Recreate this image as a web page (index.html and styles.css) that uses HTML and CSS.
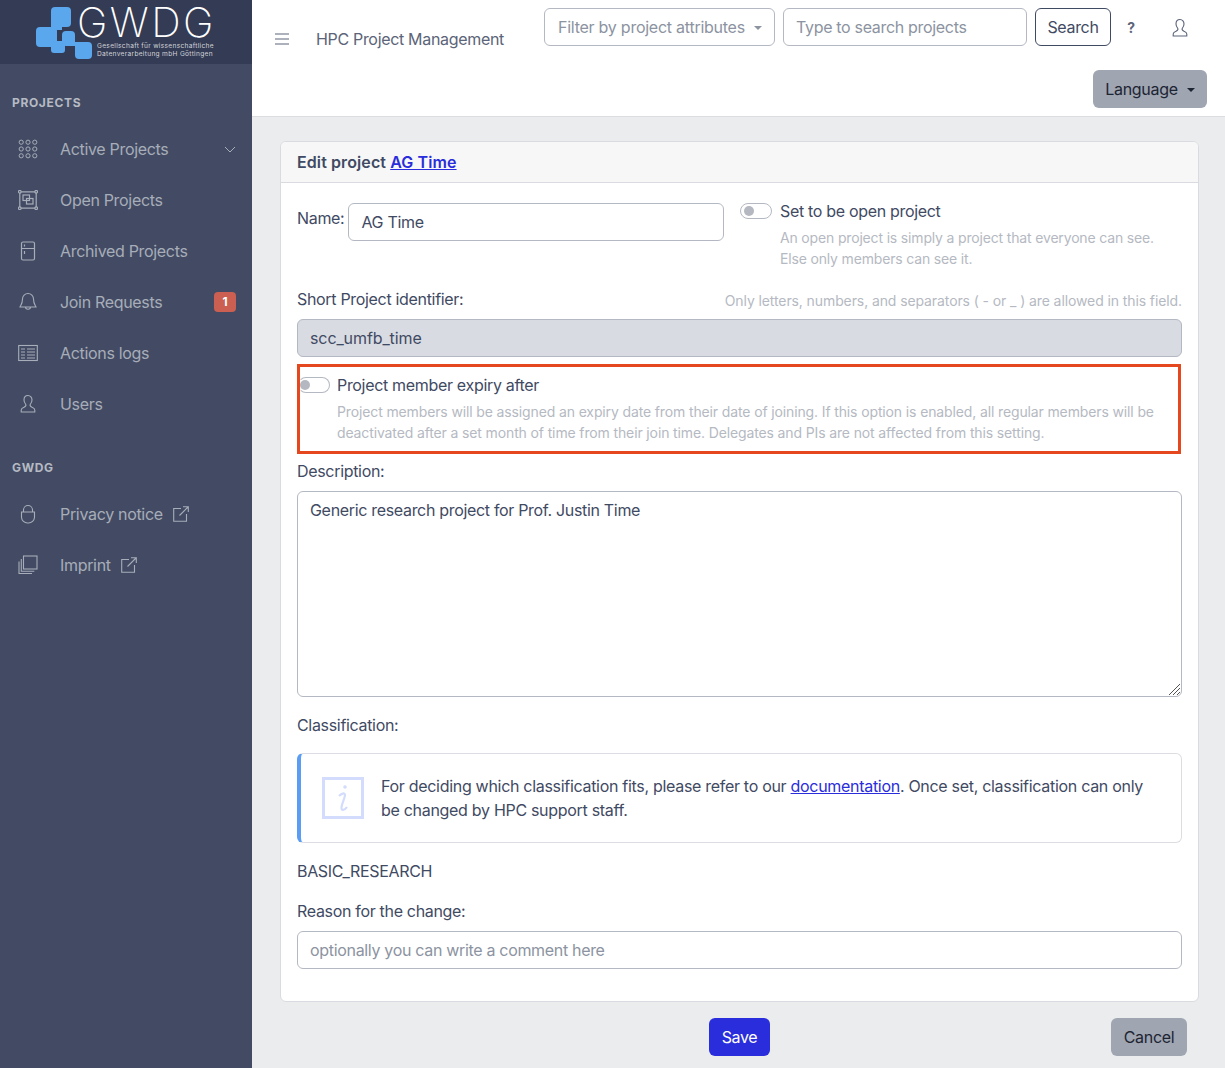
FILE: index.html
```html
<!DOCTYPE html>
<html lang="en">
<head>
    <meta charset="UTF-8">
    <meta name="viewport" content="width=device-width, initial-scale=1.0">
    <title>HPC Project Management</title>
    <link rel="stylesheet" href="styles.css">
</head>
<body>
    <aside class="sidebar">
        <div class="brand">
            <svg class="brand-mark" width="56" height="52" viewBox="0 0 56 52">
                <g fill="#5aa7ee">
                    <rect x="15" y="0" width="20" height="20" rx="4"/>
                    <rect x="0" y="20" width="21" height="20" rx="4"/>
                    <rect x="15" y="15" width="11" height="8"/>
                    <rect x="15" y="34" width="14" height="12" rx="3"/>
                    <rect x="26" y="24" width="13" height="15" rx="4"/>
                    <rect x="39" y="35" width="17" height="17" rx="4"/>
                    <rect x="35" y="35" width="8" height="4"/>
                </g>
            </svg>
            <div class="brand-text">
                <div class="brand-name">GWDG</div>
                <div class="brand-sub">Gesellschaft für wissenschaftliche<br>Datenverarbeitung mbH Göttingen</div>
            </div>
        </div>

        <div class="nav-title">PROJECTS</div>
        <a class="nav-item">
            <svg class="nav-icon" viewBox="0 0 20 20" width="20" height="20">
                <g fill="none" stroke="currentColor">
                    <circle cx="3.200" cy="3.200" r="2.100"/><circle cx="10" cy="3.200" r="2.100"/><circle cx="16.800" cy="3.200" r="2.100"/>
                    <circle cx="3.200" cy="10" r="2.100"/><circle cx="10" cy="10" r="2.100"/><circle cx="16.800" cy="10" r="2.100"/>
                    <circle cx="3.200" cy="16.800" r="2.100"/><circle cx="10" cy="16.800" r="2.100"/><circle cx="16.800" cy="16.800" r="2.100"/>
                </g>
            </svg>
            <span>Active Projects</span>
            <svg class="nav-chevron" viewBox="0 0 12 12" width="12" height="12"><path d="M1 4l5 5 5-5" fill="none" stroke="currentColor"/></svg>
        </a>
        <a class="nav-item">
            <svg class="nav-icon" viewBox="0 0 20 20" width="20" height="20">
                <g fill="none" stroke="currentColor" stroke-width="1.200">
                    <path d="M3 1.800h14M3 18.200h14M1.800 3v14M18.200 3v14"/>
                    <circle cx="1.800" cy="1.800" r="1.300"/><circle cx="18.200" cy="1.800" r="1.300"/><circle cx="1.800" cy="18.200" r="1.300"/><circle cx="18.200" cy="18.200" r="1.300"/>
                    <rect x="5" y="5" width="6.500" height="5.500"/><rect x="8.500" y="8.500" width="6.500" height="5.500"/>
                </g>
            </svg>
            <span>Open Projects</span>
        </a>
        <a class="nav-item">
            <svg class="nav-icon" viewBox="0 0 20 20" width="20" height="20">
                <g fill="none" stroke="currentColor" stroke-width="1.200">
                    <rect x="3.500" y="1" width="13" height="18" rx="1.500"/>
                    <path d="M3.500 7.500h13M6.500 3.500v2M6.500 10v3"/>
                </g>
            </svg>
            <span>Archived Projects</span>
        </a>
        <a class="nav-item">
            <svg class="nav-icon" viewBox="0 0 20 20" width="20" height="20">
                <path d="M10 1.500a5.500 5.500 0 0 0-5.500 5.500c0 5-2 6.500-2.500 8h16c-.5-1.500-2.500-3-2.500-8A5.500 5.500 0 0 0 10 1.500zM7.500 15c0 3 5 3 5 0" fill="none" stroke="currentColor" stroke-width="1.100"/>
            </svg>
            <span>Join Requests</span>
            <span class="nav-badge">1</span>
        </a>
        <a class="nav-item">
            <svg class="nav-icon" viewBox="0 0 20 20" width="20" height="20">
                <rect x=".7" y="2.500" width="18.600" height="15" fill="none" stroke="currentColor" stroke-width="1.100"/>
                <path d="M3 6h4M9 6h8M3 9h4M9 9h8M3 12h4M9 12h8M3 15h4M9 15h8" stroke="currentColor" stroke-width="1.200"/>
            </svg>
            <span>Actions logs</span>
        </a>
        <a class="nav-item">
            <svg class="nav-icon" viewBox="0 0 20 20" width="20" height="20">
                <path d="M10 1.500c-2.500 0-4 2-4 4.500 0 2 1 3.500 1.800 4.500.5 1-.3 2-1.800 2.800-1.500.7-2.800 1.300-2.800 2.700v2h13.600v-2c0-1.400-1.300-2-2.800-2.700-1.500-.8-2.300-1.800-1.800-2.800.8-1 1.800-2.500 1.800-4.500 0-2.500-1.500-4.500-4-4.500z" fill="none" stroke="currentColor" stroke-width="1.100"/>
            </svg>
            <span>Users</span>
        </a>

        <div class="nav-title">GWDG</div>
        <a class="nav-item">
            <svg class="nav-icon" viewBox="0 0 20 20" width="20" height="20">
                <path d="M5.500 8V6a4.500 4.500 0 0 1 9 0v2M3.500 8h13v5.500a6 6 0 0 1-6 5.500h-1a6 6 0 0 1-6-5.500z" fill="none" stroke="currentColor" stroke-width="1.100"/>
            </svg>
            <span>Privacy notice</span>
            <svg class="nav-ext" viewBox="0 0 16 16" width="16" height="16">
                <path d="M8 2.500H.7v12.800h12.800V8M6.500 9.500L15 1M10 .7h5.300V6" fill="none" stroke="currentColor" stroke-width="1.100"/>
            </svg>
        </a>
        <a class="nav-item">
            <svg class="nav-icon" viewBox="0 0 20 20" width="20" height="20">
                <g fill="none" stroke="currentColor" stroke-width="1.100">
                    <rect x="5.500" y="1" width="13.500" height="13"/>
                    <path d="M3.300 4v12.300h13M1 6.500v12h13"/>
                </g>
            </svg>
            <span>Imprint</span>
            <svg class="nav-ext" viewBox="0 0 16 16" width="16" height="16">
                <path d="M8 2.500H.7v12.800h12.800V8M6.500 9.500L15 1M10 .7h5.300V6" fill="none" stroke="currentColor" stroke-width="1.100"/>
            </svg>
        </a>
    </aside>

    <div class="main">
        <header class="topbar">
            <div class="topbar-row">
                <div class="topbar-left">
                    <svg class="menu-icon" viewBox="0 0 14 12" width="14" height="12"><path d="M0 1h14M0 6h14M0 11h14" stroke="#5b6478" stroke-width="1.200"/></svg>
                    <span class="app-title">HPC Project Management</span>
                </div>
                <button class="field filter-select">Filter by project attributes<i class="caret"></i></button>
                <div class="field search-field">Type to search projects</div>
                <button class="search-button">Search</button>
                <span class="help">?</span>
                <svg class="user-icon" viewBox="0 0 20 20" width="20" height="20">
                    <path d="M10 1.500c-2.500 0-4 2-4 4.500 0 2 1 3.500 1.800 4.500.5 1-.3 2-1.800 2.800-1.500.7-2.800 1.300-2.800 2.700v2h13.600v-2c0-1.400-1.300-2-2.800-2.700-1.500-.8-2.300-1.800-1.800-2.800.8-1 1.800-2.500 1.800-4.500 0-2.500-1.500-4.500-4-4.500z" fill="none" stroke="#5b6478" stroke-width="1.100"/>
                </svg>
            </div>
            <div class="topbar-lang">
                <button class="lang-button">Language<i class="caret caret-dark"></i></button>
            </div>
        </header>

        <main class="content">
            <section class="card">
                <div class="card-header">Edit project <a class="link">AG Time</a></div>
                <div class="card-body">
                    <div class="name-row">
                        <div class="name-col">
                            <label class="name-label">Name:</label>
                            <div class="input">AG Time</div>
                        </div>
                        <div class="open-col">
                            <div class="switch-line"><span class="switch"></span><span>Set to be open project</span></div>
                            <p class="hint">An open project is simply a project that everyone can see.<br>Else only members can see it.</p>
                        </div>
                    </div>

                    <div class="short-head">
                        <label>Short Project identifier:</label>
                        <span class="hint">Only letters, numbers, and separators ( - or _ ) are allowed in this field.</span>
                    </div>
                    <div class="input input-disabled">scc_umfb_time</div>

                    <div class="expiry-box">
                        <div class="switch-line"><span class="switch switch-tight"></span><span>Project member expiry after</span></div>
                        <p class="hint">Project members will be assigned an expiry date from their date of joining. If this option is enabled, all regular members will be deactivated after a set month of time from their join time. Delegates and PIs are not affected from this setting.</p>
                    </div>

                    <label class="block-label">Description:</label>
                    <div class="textarea">Generic research project for Prof. Justin Time
                        <svg class="resize-grip" viewBox="0 0 12 12" width="12" height="12"><path d="M1 12L12 1M5 12l7-7M9 12l3-3" stroke="#555" stroke-width="1"/></svg>
                    </div>

                    <label class="block-label class-label">Classification:</label>
                    <div class="callout">
                        <svg class="callout-icon" viewBox="0 0 42 42" width="42" height="42">
                            <rect x="1.500" y="1.500" width="39" height="39" fill="none" stroke="#d3dcfd" stroke-width="3"/>
                            <circle cx="23" cy="10" r="1.800" fill="#d3dcfd"/>
                            <path d="M17 19c2-2 6-4 6-1 0 3-3.500 9-3.500 13 0 3 3.500 2 5.500-1" fill="none" stroke="#d3dcfd" stroke-width="2.200"/>
                        </svg>
                        <p>For deciding which classification fits, please refer to our <a class="link-plain">documentation</a>. Once set, classification can only be changed by HPC support staff.</p>
                    </div>

                    <div class="class-value">BASIC_RESEARCH</div>
                    <label class="block-label reason-label">Reason for the change:</label>
                    <div class="input input-placeholder">optionally you can write a comment here</div>
                </div>
            </section>

            <div class="form-actions">
                <button class="btn-save">Save</button>
                <button class="btn-cancel">Cancel</button>
            </div>
        </main>
    </div>
</body>
</html>
```

FILE: styles.css
```css
* {
    margin: 0;
    padding: 0;
    box-sizing: border-box;
}

html, body {
    height: 100%;
    overflow: hidden;
}

body {
    font-family: Inter, "Liberation Sans", sans-serif;
    font-size: 16px;
    line-height: 24px;
    letter-spacing: -0.32px;
    color: #3f4a63;
    display: flex;
    background-color: #ebecee;
}

button {
    font: inherit;
    letter-spacing: inherit;
}

/* sidebar */
.sidebar {
    width: 252px;
    flex-shrink: 0;
    background-color: #424b63;
    color: #a7adb9;
}

.brand {
    height: 64px;
    background-color: #343b54;
    display: flex;
    padding-left: 36px;
}

.brand-mark {
    flex-shrink: 0;
    margin-top: 7px;
    margin-right: -15px;
}

.brand-text {
    color: #fff;
    margin-top: 4px;
}

.brand-name {
    font-size: 41px;
    font-weight: 200;
    line-height: 36px;
    letter-spacing: 2.500px;
}

.brand-sub {
    font-size: 6.600px;
    line-height: 8px;
    letter-spacing: .3px;
    color: #d2d4da;
    margin-left: 20px;
    margin-top: 2px;
    white-space: nowrap;
}

.nav-title {
    font-size: 12px;
    font-weight: 700;
    line-height: 16px;
    letter-spacing: .65px;
    color: #b6bac4;
    padding-left: 12px;
    margin-top: 31px;
    margin-bottom: 12px;
}

.nav-item {
    height: 51px;
    display: flex;
    align-items: center;
    padding-left: 18px;
    padding-right: 16px;
}

.nav-icon {
    margin-right: 22px;
    flex-shrink: 0;
}

.nav-chevron {
    margin-left: auto;
}

.nav-badge {
    margin-left: auto;
    width: 22px;
    height: 20px;
    background-color: #cb5f51;
    color: #fff;
    border-radius: 4px;
    font-size: 12px;
    font-weight: 700;
    line-height: 20px;
    text-align: center;
}

.nav-ext {
    margin-left: 10px;
}

/* top bar */
.main {
    flex: 1;
    min-width: 0;
    display: flex;
    flex-direction: column;
}

.topbar {
    height: 117px;
    background-color: #fff;
    border-bottom: 1px solid #dcdde1;
    padding: 8px 18px 0 23px;
}

.topbar-row {
    display: flex;
    align-items: flex-start;
    height: 38px;
}

.topbar-left {
    width: 269px;
    display: flex;
    align-items: center;
    height: 62px;
    flex-shrink: 0;
}

.menu-icon {
    margin-right: 27px;
}

.app-title {
    color: #5b6478;
}

.field {
    height: 38px;
    border: 1px solid #b4b8c2;
    border-radius: 6px;
    background-color: #fff;
    color: #8c93a1;
    padding: 0 12px;
    line-height: 36px;
    text-align: left;
    white-space: nowrap;
}

.filter-select {
    width: 231px;
    margin-right: 8px;
    padding-left: 13px;
    letter-spacing: -0.25px;
}

.caret {
    display: inline-block;
    margin-left: 9px;
    vertical-align: 3px;
    border-top: 4px solid #8c93a1;
    border-left: 4px solid transparent;
    border-right: 4px solid transparent;
}

.caret-dark {
    border-top-color: #1d2433;
}

.search-field {
    width: 244px;
    margin-right: 8px;
}

.search-button {
    width: 76px;
    height: 38px;
    border: 1px solid #3f4a63;
    border-radius: 6px;
    background-color: #fff;
    color: #3f4a63;
}

.help {
    width: 40px;
    text-align: center;
    font-size: 14px;
    font-weight: 700;
    line-height: 40px;
    color: #5b6478;
}

.user-icon {
    margin-left: 19px;
    margin-top: 10px;
}

.topbar-lang {
    display: flex;
    justify-content: flex-end;
    margin-top: 24px;
}

.lang-button {
    width: 114px;
    height: 38px;
    border: none;
    border-radius: 6px;
    background-color: #9fa5b1;
    color: #1d2433;
}

/* form card */
.content {
    flex: 1;
    padding: 24px 26px 0 28px;
}

.card {
    width: 919px;
    height: 861px;
    background-color: #fff;
    border: 1px solid #d9dbe0;
    border-radius: 6px;
    overflow: hidden;
}

.card-header {
    height: 41px;
    background-color: #f7f7f8;
    border-bottom: 1px solid #d9dbe0;
    padding: 8px 16px;
    font-weight: 600;
    letter-spacing: .1px;
}

.link {
    color: #2a2ddb;
    text-decoration: underline;
}

.link-plain {
    color: #2a2ddb;
    text-decoration: underline;
}

.card-body {
    padding: 20px 16px;
}

.name-row {
    display: flex;
    height: 76px;
}

.name-col {
    display: flex;
    width: 427px;
    flex-shrink: 0;
    align-items: flex-start;
}

.name-label {
    margin-right: 4px;
    margin-top: 3px;
}

.name-col .input {
    flex: 1;
}

.open-col {
    margin-left: 16px;
    margin-top: -4px;
}

.switch-line {
    display: flex;
    align-items: center;
    height: 24px;
    color: #3f4a63;
}

.switch {
    width: 32px;
    height: 16px;
    border: 1px solid #b4b8c2;
    border-radius: 8px;
    margin-right: 8px;
    position: relative;
    flex-shrink: 0;
}

.switch::before {
    content: "";
    position: absolute;
    left: 3px;
    top: 2px;
    width: 10px;
    height: 10px;
    border-radius: 50%;
    background-color: #b5b8c0;
}

.switch-tight {
    margin-left: -2px;
    margin-right: 7px;
    border-left-color: transparent;
}

.switch-tight::before {
    left: 1px;
}

.hint {
    font-size: 14px;
    line-height: 21px;
    letter-spacing: -0.13px;
    color: #b5b9c2;
}

.open-col .hint {
    margin-top: 4px;
    margin-left: 40px;
    letter-spacing: -0.165px;
}

.short-head {
    display: flex;
    justify-content: space-between;
    align-items: flex-end;
    height: 24px;
    margin-top: 8px;
    margin-bottom: 8px;
}

.short-head .hint {
    letter-spacing: -0.1px;
}

.input {
    height: 38px;
    border: 1px solid #b4b8c2;
    border-radius: 6px;
    padding: 0 12px;
    line-height: 36px;
}

.input-disabled {
    background-color: #d9dbe2;
    letter-spacing: -0.1px;
}

.input-placeholder {
    color: #8c93a1;
}

.expiry-box {
    margin-top: 7px;
    margin-right: 1px;
    height: 90px;
    border: 3px solid #e5481f;
    padding: 6px 15px 0 0;
}

.expiry-box .hint {
    margin-left: 37px;
    margin-top: 4px;
}

.block-label {
    display: block;
    margin-top: 5px;
    margin-bottom: 8px;
}

.textarea {
    position: relative;
    height: 206px;
    border: 1px solid #b4b8c2;
    border-radius: 6px;
    padding: 6px 12px;
}

.resize-grip {
    position: absolute;
    right: 1px;
    bottom: 1px;
}

.class-label {
    margin-top: 16px;
    margin-bottom: 16px;
}

.callout {
    height: 90px;
    border: 1px solid #dcdde3;
    border-left: 4px solid #5b9cf5;
    border-radius: 6px;
    display: flex;
    align-items: center;
    padding-left: 21px;
    padding-right: 20px;
    letter-spacing: -0.3px;
}

.callout-icon {
    flex-shrink: 0;
    margin-right: 17px;
}

.class-value {
    margin-top: 16px;
}

.reason-label {
    margin-top: 16px;
}

.form-actions {
    position: relative;
    display: flex;
    justify-content: center;
    margin-top: 16px;
    width: 919px;
}

.btn-save {
    width: 61px;
    height: 38px;
    border: none;
    border-radius: 6px;
    background-color: #2a2ddb;
    color: #fff;
}

.btn-cancel {
    position: absolute;
    right: 12px;
    top: 0;
    width: 76px;
    height: 38px;
    border: none;
    border-radius: 6px;
    background-color: #9fa5b1;
    color: #1d2433;
}
```
